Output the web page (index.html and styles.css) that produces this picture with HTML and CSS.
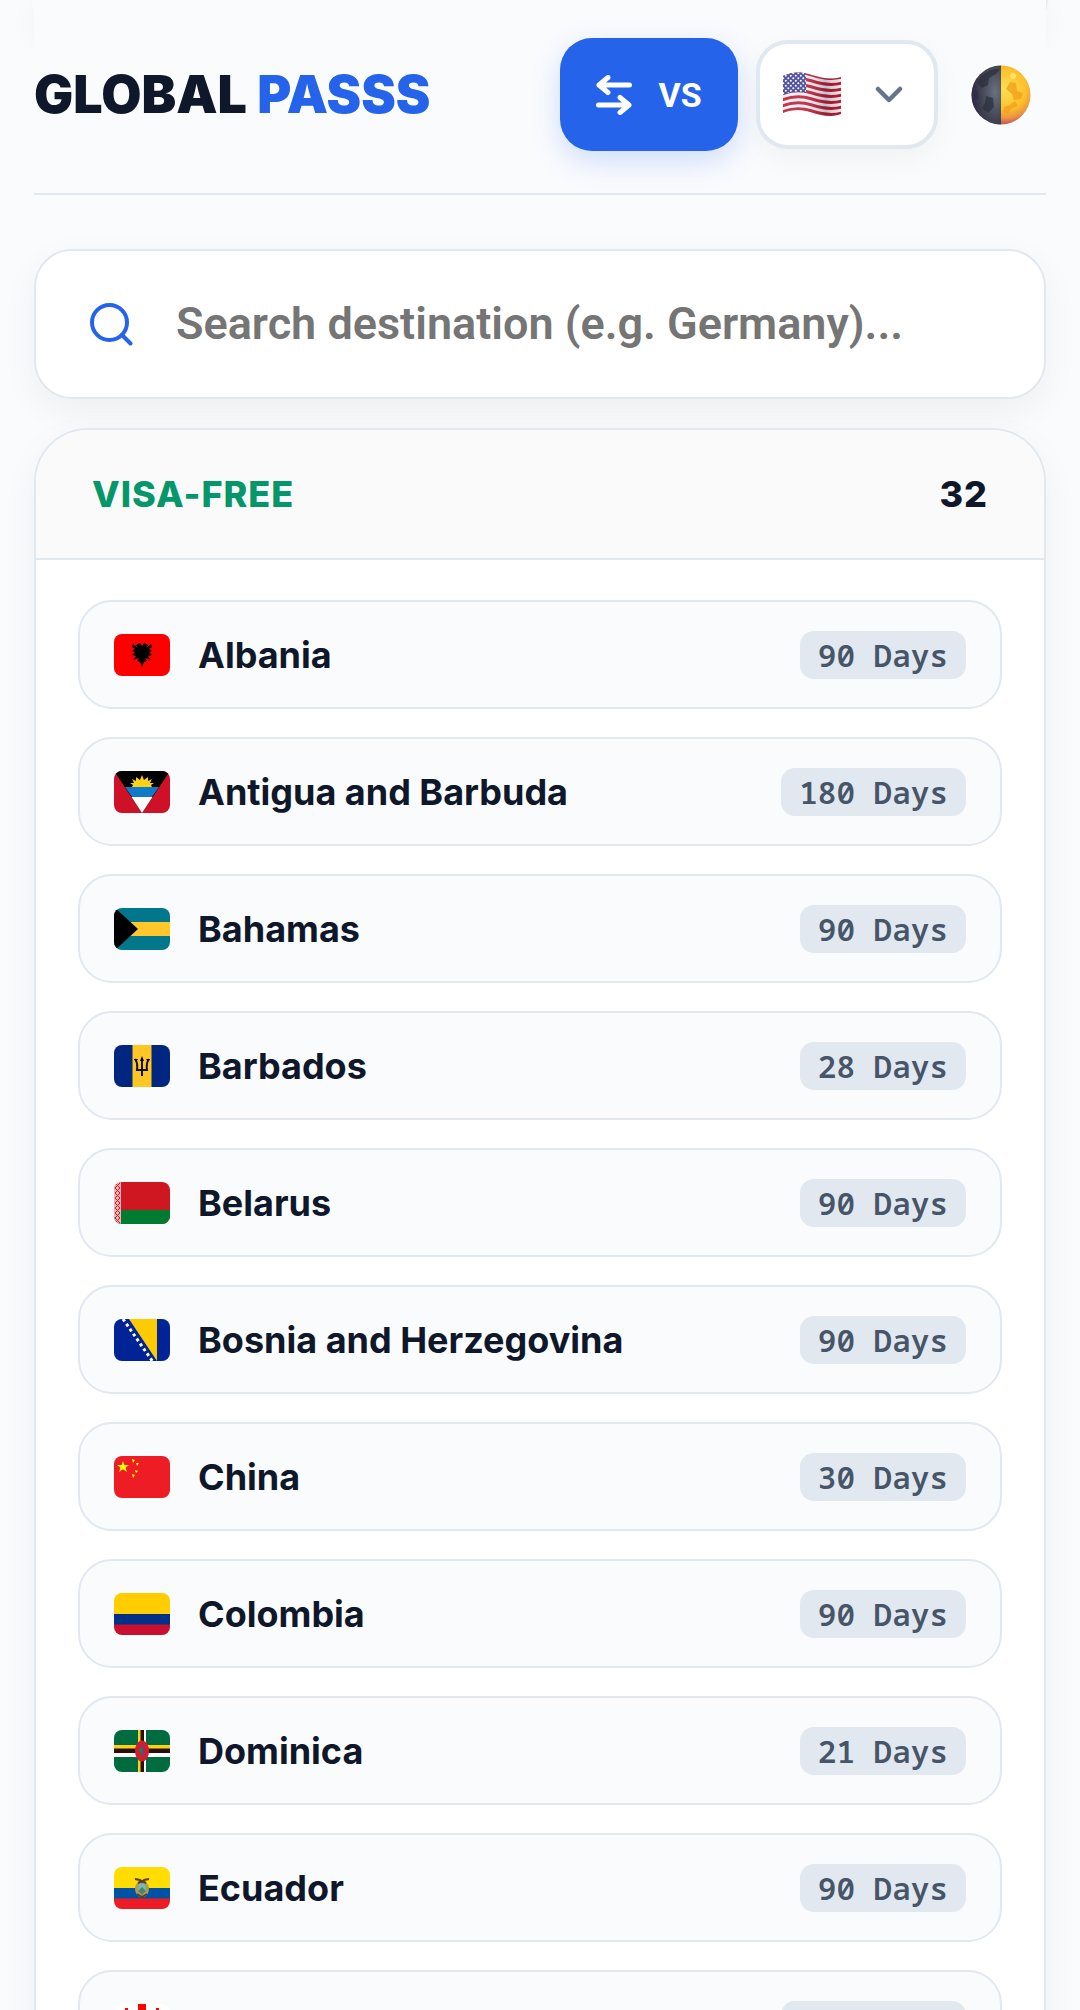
FILE: index.html
```html
<!DOCTYPE html>
<html lang="en">
<head>
<meta charset="utf-8">
<meta name="viewport" content="width=device-width, initial-scale=1">
<title>Global Passs</title>
<link rel="stylesheet" href="styles.css">
</head>
<body>
<div class="app">
  <div class="scrolled-card" aria-hidden="true"></div>
  <header class="topbar">
    <h1 class="brand">GLOBAL <span class="brand-accent">PASSS</span></h1>
    <div class="actions">
      <button class="vs-button" type="button">
        <svg class="vs-icon" viewBox="0 0 36 40" aria-hidden="true"><path d="M33.500 10H3M12 2.500 3 10l9 7.500M2.500 30H33M24 22.500l9 7.500-9 7.500" fill="none" stroke="#fff" stroke-width="5" stroke-linecap="round" stroke-linejoin="round"/></svg>
        <span>VS</span>
      </button>
      <div class="passport">
        <select class="passport-select" aria-label="Passport country"><option value="US" aria-label="United States"></option></select>
        <svg class="passport-flag" viewBox="0 0 60 46" aria-hidden="true">
          <defs>
            <clipPath id="wave"><path d="M1 4C12-1 21 0 30 3s19 5 29 2v37c-10 4-20 2-29-1S11 37 1 41Z"/></clipPath>
            <linearGradient id="fold"><stop offset="0" stop-color="#fff" stop-opacity=".1"/><stop offset=".35" stop-color="#fff" stop-opacity=".12"/><stop offset=".72" stop-color="#1b1030" stop-opacity=".22"/><stop offset="1" stop-color="#000" stop-opacity=".03"/></linearGradient>
            <pattern id="stars" width="5" height="5" patternUnits="userSpaceOnUse"><rect width="5" height="5" fill="#3c3f92"/><circle cx="1.300" cy="1.300" r="1" fill="#fff"/><circle cx="3.800" cy="3.800" r="1" fill="#fff"/></pattern>
          </defs>
          <g clip-path="url(#wave)">
            <path fill="#f7f3f4" d="M0-2h60v50H0z"/>
            <path fill="none" stroke="#be1e38" stroke-width="3" d="M0 4C12-1 21 0 30 3s19 5 30 2M0 10C12 5 21 6 30 9s19 5 30 2M0 16c12-5 21-4 30-1s19 5 30 2M0 22c12-5 21-4 30-1s19 5 30 2M0 28c12-5 21-4 30-1s19 5 30 2M0 34c12-5 21-4 30-1s19 5 30 2M0 40c12-5 21-4 30-1s19 5 30 2"/>
            <path fill="url(#stars)" d="M0 0h24v21c-8-2-16-1-24 2Z"/>
            <path fill="url(#fold)" d="M0-2h60v50H0z"/>
          </g>
        </svg>
        <svg class="passport-chevron" viewBox="0 0 28 18" aria-hidden="true"><path d="m3 3 11 11L25 3" fill="none" stroke="#64748b" stroke-width="4.500" stroke-linecap="round" stroke-linejoin="round"/></svg>
      </div>
      <button class="theme-button" type="button" aria-label="Toggle theme">
        <svg class="moon" viewBox="0 0 60 60" aria-hidden="true">
          <defs>
            <radialGradient id="lit" cx=".58" cy=".4" r=".58"><stop offset="0" stop-color="#ffdf55"/><stop offset=".6" stop-color="#fcc02a"/><stop offset=".85" stop-color="#eb9242"/><stop offset="1" stop-color="#c95d58"/></radialGradient>
            <radialGradient id="dark" cx=".8" cy=".45" r=".85"><stop offset="0" stop-color="#697080"/><stop offset=".6" stop-color="#3d4150"/><stop offset="1" stop-color="#2b2548"/></radialGradient>
          </defs>
          <circle cx="30" cy="30" r="29.500" fill="url(#lit)"/>
          <path d="M30 .5a29.500 29.500 0 0 0 0 59Z" fill="url(#dark)"/>
          <path d="M29 4c-10-1-19 5-23 14l5 5 6-3 1-7 7-4ZM3 24l4 3 1 7-5 1ZM15 31l7 2 1 9-6 6-6-5 3-5Z" fill="#2c303d" fill-opacity=".75"/>
          <path d="m39 17 6 1 1 8 6 2-2 6-7 1-2-6-6-5ZM33 42l6-2 5-4 3 5-7 3-3 5-5-2Z" fill="#f2a01f" fill-opacity=".8"/>
          <circle cx="42" cy="11" r="3" fill="#ffe16b"/>
        </svg>
      </button>
    </div>
  </header>

  <main class="content">
    <label class="search">
      <svg class="search-icon" viewBox="0 0 44 44" aria-hidden="true"><circle cx="19.500" cy="20.500" r="17.500" fill="none" stroke="#2563eb" stroke-width="4"/><path d="m32 33 8.500 8.500" fill="none" stroke="#2563eb" stroke-width="4" stroke-linecap="round"/></svg>
      <input class="search-input" type="text" placeholder="Search destination (e.g. Germany)..." aria-label="Search destination">
    </label>

    <section class="card">
      <h2 class="card-head"><span class="card-title">VISA-FREE</span><span>32</span></h2>
      <ul class="rows">
        <li class="row">
          <svg class="flag" viewBox="0 0 56 42" aria-hidden="true"><path fill="#f00" d="M0 0h56v42H0z"/><path d="m28 12-2-3-4 2 2 3-5-4-1 3 3 2-3 2 3 1-3 3 4 1-3 4 6-2-2 3 3 1 2 5 2-5 3-1-2-3 6 2-3-4 4-1-3-3 3-1-3-2 3-2-1-3-5 4 2-3-4-2Z"/></svg>
          <span class="name">Albania</span><span class="days">90 Days</span>
        </li>
        <li class="row">
          <svg class="flag" viewBox="0 0 56 42" aria-hidden="true"><path fill="#ce1126" d="M0 0h56v42H0z"/><path d="M0 0h56L28 42Z"/><path fill="#0f7ac9" d="M11 16h34l-7 10H18Z"/><path fill="#fff" d="M17.500 26h21L28 42Z"/><path fill="#fcd116" d="m18 16 1-2-3-2 4 0-2-4 4 2 0-4 4 3 2-5 2 5 4-3 0 4 4-2-2 4 4 0-3 2 1 2Z"/></svg>
          <span class="name">Antigua and Barbuda</span><span class="days">180 Days</span>
        </li>
        <li class="row">
          <svg class="flag" viewBox="0 0 56 42" aria-hidden="true"><path fill="#00778b" d="M0 0h56v42H0z"/><path fill="#ffc72c" d="M0 14h56v14H0z"/><path d="m0-1 24 22L0 43Z"/></svg>
          <span class="name">Bahamas</span><span class="days">90 Days</span>
        </li>
        <li class="row">
          <svg class="flag" viewBox="0 0 56 42" aria-hidden="true"><path fill="#00267f" d="M0 0h56v42H0z"/><path fill="#ffc726" d="M18.500 0h19v42h-19z"/><path fill="none" stroke="#111" stroke-width="2" d="M28 13v18M21 14q3 4 2 11h10q-1-7 2-11"/><path d="m28 11 2 5h-4ZM20 14h4l-2 3ZM32 14h4l-2 3Z"/></svg>
          <span class="name">Barbados</span><span class="days">28 Days</span>
        </li>
        <li class="row">
          <svg class="flag" viewBox="0 0 56 42" aria-hidden="true"><path fill="#ce1720" d="M0 0h56v42H0z"/><path fill="#007c30" d="M0 28h56v14H0z"/><path fill="#eab4b8" d="M0 0h7v42H0z"/><path fill="none" stroke="#ce1720" d="m1 1 5 5-5 5 5 5-5 5 5 5-5 5 5 5-5 5M6 1 1 6l5 5-5 5 5 5-5 5 5 5-5 5 5 5"/></svg>
          <span class="name">Belarus</span><span class="days">90 Days</span>
        </li>
        <li class="row">
          <svg class="flag" viewBox="0 0 56 42" aria-hidden="true"><path fill="#002395" d="M0 0h56v42H0z"/><path fill="#fecb00" d="M15 0h28v42Z"/><path fill="none" stroke="#fff" stroke-width="3" stroke-dasharray="3 3" d="m9 0 30 43"/></svg>
          <span class="name">Bosnia and Herzegovina</span><span class="days">90 Days</span>
        </li>
        <li class="row">
          <svg class="flag" viewBox="0 0 56 42" aria-hidden="true"><path fill="#ee1c25" d="M0 0h56v42H0z"/><path fill="#ff0" d="m9 5 1.300 4H15l-3.500 2.600L13 16l-4-2.700L5 16l1.500-4.400L3 9h4.700ZM18 3l3 1-2 3ZM22 7h3l-2 3ZM21 14l3 1-2 2ZM18 18l3 1-2 3Z"/></svg>
          <span class="name">China</span><span class="days">30 Days</span>
        </li>
        <li class="row">
          <svg class="flag" viewBox="0 0 56 42" aria-hidden="true"><path fill="#ffcd00" d="M0 0h56v21H0z"/><path fill="#003087" d="M0 21h56v11H0z"/><path fill="#c8102e" d="M0 31.500h56V42H0z"/></svg>
          <span class="name">Colombia</span><span class="days">90 Days</span>
        </li>
        <li class="row">
          <svg class="flag" viewBox="0 0 56 42" aria-hidden="true"><path fill="#006b3f" d="M0 0h56v42H0z"/><path fill="#fcd116" d="M24 0h3v42h-3zM0 15h56v4H0z"/><path fill="#fff" d="M29 0h3v42h-3zM0 23h56v4H0z"/><path fill="#2a0d08" d="M26.500 0H30v42h-3.500zM0 18.500h56V23H0z"/><ellipse cx="28" cy="21" rx="7" ry="10.500" fill="#d41c30"/><ellipse cx="28" cy="21" rx="5.500" ry="8.500" fill="none" stroke="#7b4c26" stroke-dasharray="1 3"/><path fill="#614781" d="m28 14 2 5-1 8-3-3Z"/><path fill="#168450" d="m25 20 3-3v8Z"/></svg>
          <span class="name">Dominica</span><span class="days">21 Days</span>
        </li>
        <li class="row">
          <svg class="flag" viewBox="0 0 56 42" aria-hidden="true"><path fill="#fd0" d="M0 0h56v21H0z"/><path fill="#0052a5" d="M0 21h56v11H0z"/><path fill="#ed1c24" d="M0 31.500h56V42H0z"/><ellipse cx="28" cy="22" rx="7" ry="8.500" fill="#ad9b54"/><ellipse cx="28" cy="22" rx="4" ry="6" fill="#74bac0"/><path fill="#5d8054" d="m24 24 4-4 4 4-4 4Z"/><path fill="none" stroke="#5b4025" stroke-width="2" d="m21 12 5 1 2 2 2-2 5-1M24 16l4-2 4 2M23 27l5 3 5-3"/></svg>
          <span class="name">Ecuador</span><span class="days">90 Days</span>
        </li>
        <li class="row">
          <svg class="flag" viewBox="0 0 56 42" aria-hidden="true"><path fill="#fff" d="M0 0h56v42H0z"/><path fill="red" d="M24 0h8v17h24v8H32v17h-8V25H0v-8h24zM11 4h3v3h3v3h-3v4h-3v-4H8V7h3zM42 4h3v3h3v3h-3v4h-3v-4h-3V7h3z"/></svg>
          <span class="name">Georgia</span><span class="days">365 Days</span>
        </li>
      </ul>
    </section>
  </main>
</div>
</body>
</html>
```

FILE: styles.css
```css
* {
  box-sizing: border-box;
}

body {
  margin: 0;
  background: #fafbfd;
  color: #0f172a;
  font-family: Inter, "Liberation Sans", sans-serif;
}

button,
input,
select {
  margin: 0;
  font-family: Roboto, "Liberation Sans", sans-serif;
}

svg {
  display: block;
  flex: none;
}

.app {
  height: 100vh;
  padding: 0 34px;
  overflow: hidden;
}

/* Tail of the card that has scrolled away under the top bar */
.scrolled-card {
  height: 34px;
  margin: 0 -2px -34px;
  border: 2px solid #e8ebef;
  border-top: 0;
  border-left-color: transparent;
  border-radius: 0 0 56px 56px;
  box-shadow: 0 10px 30px rgba(0, 0, 0, 0.06);
}

.topbar {
  position: relative;
  display: flex;
  align-items: center;
  justify-content: space-between;
  padding: 38px 0 42px;
  border-bottom: 2px solid #e2e8f0;
  background: #fafbfd;
}

.brand {
  margin: 0;
  font-family: Inter, "Liberation Sans", sans-serif;
  font-size: 52px;
  font-weight: 900;
  line-height: 64px;
  white-space: nowrap;
}

.brand-accent {
  color: #2563eb;
}

.actions {
  display: flex;
  align-items: center;
  gap: 18px;
}

.vs-button {
  display: flex;
  align-items: center;
  justify-content: center;
  gap: 26px;
  width: 178px;
  height: 113px;
  padding: 0;
  border: 0;
  border-radius: 32px;
  background: #2563eb;
  box-shadow: 0 10px 30px rgba(37, 99, 235, 0.2);
  color: #fff;
  font-size: 34px;
  font-weight: 700;
}

.vs-icon {
  width: 36px;
  height: 40px;
}

.passport {
  position: relative;
  width: 182px;
  height: 109px;
}

.passport-select {
  width: 100%;
  height: 100%;
  border: 4px solid #e2e8f0;
  border-radius: 32px;
  background: #fff;
  box-shadow: 0 10px 30px rgba(0, 0, 0, 0.04);
  appearance: none;
}

.passport-flag,
.passport-chevron {
  position: absolute;
  pointer-events: none;
}

.passport-flag {
  top: 32px;
  left: 26px;
  width: 60px;
  height: 46px;
}

.passport-chevron {
  top: 46px;
  right: 35px;
  width: 28px;
  height: 18px;
}

.theme-button {
  display: flex;
  align-items: center;
  justify-content: center;
  width: 90px;
  height: 90px;
  padding: 0;
  border: 0;
  background: none;
}

.moon {
  width: 60px;
  height: 60px;
}

.content {
  display: flex;
  flex-direction: column;
  gap: 29px;
  padding-top: 54px;
}

.search {
  display: flex;
  align-items: center;
  gap: 42px;
  height: 150px;
  padding: 0 54px;
  border: 2px solid #e2e8f0;
  border-radius: 38px;
  background: #fff;
  box-shadow: 0 12px 36px rgba(0, 0, 0, 0.05);
}

.search-icon {
  width: 44px;
  height: 44px;
}

.search-input {
  flex: 1;
  min-width: 0;
  padding: 0;
  border: 0;
  outline: 0;
  background: none;
  color: #0f172a;
  font-size: 45px;
  font-weight: 600;
  line-height: 56px;
}

.search-input::placeholder {
  color: #757575;
}

.card {
  overflow: hidden;
  border: 2px solid #e2e8f0;
  border-radius: 54px;
  background: #fff;
  box-shadow: 0 12px 36px rgba(0, 0, 0, 0.05);
}

.card-head {
  display: flex;
  align-items: center;
  justify-content: space-between;
  height: 130px;
  margin: 0;
  padding: 0 56px;
  border-bottom: 2px solid #e2e8f0;
  background: #fafafa;
  font-size: 36px;
  font-weight: 800;
  letter-spacing: 1px;
}

.card-title {
  color: #059669;
}

.rows {
  display: flex;
  flex-direction: column;
  gap: 28px;
  margin: 0;
  padding: 40px 42px;
  list-style: none;
}

.row {
  display: flex;
  align-items: center;
  gap: 28px;
  height: 109px;
  padding: 0 34px;
  border: 2px solid #e2e8f0;
  border-radius: 34px;
  background: #fafbfd;
}

.flag {
  width: 56px;
  height: 42px;
  border-radius: 8px;
}

.name {
  flex: 1;
  font-size: 36px;
  font-weight: 700;
}

.days {
  padding: 0 18px;
  border-radius: 14px;
  background: #e2e8f0;
  color: #475569;
  font-family: "Noto Sans Mono", "Droid Sans Mono", "DejaVu Sans Mono", monospace;
  font-size: 31px;
  font-weight: 600;
  line-height: 48px;
}
```
